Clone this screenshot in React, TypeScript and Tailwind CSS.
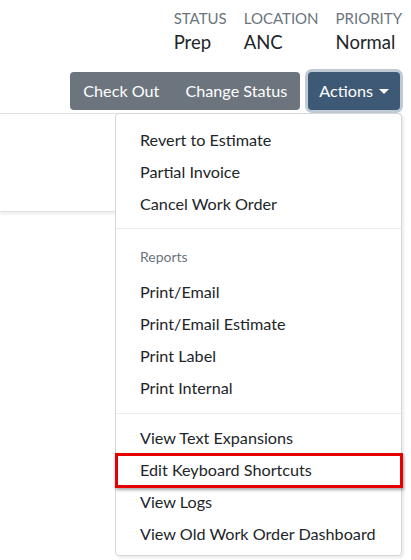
import React from "react";

const items1 = ["Revert to Estimate", "Partial Invoice", "Cancel Work Order"];
const items2 = ["Print/Email", "Print/Email Estimate", "Print Label", "Print Internal"];
const items3 = ["View Text Expansions", "Edit Keyboard Shortcuts", "View Logs", "View Old Work Order Dashboard"];

function Item({ label, boxed }: { label: string; boxed?: boolean }) {
  return (
    <div className="relative h-[32px] flex items-center pl-[24px] text-[16.2px] text-[#212529] whitespace-nowrap">
      {label}
      {boxed && (
        <div className="absolute left-[-1px] right-[-2px] top-[-1px] bottom-[-2px] border-[3px] border-[#e60000] shadow-[1px_2px_3px_rgba(0,0,0,0.35)]" />
      )}
    </div>
  );
}

export default function App() {
  return (
    <div className="w-[411px] h-[560px] bg-white overflow-hidden" style={{ fontFamily: "Lato, 'Noto Sans', Arial, sans-serif" }}>
      <div className="flex justify-end gap-[17px] pt-[8px] pr-[9px]">
        {[
          ["STATUS", "Prep"],
          ["LOCATION", "ANC"],
          ["PRIORITY", "Normal"],
        ].map(([k, v]) => (
          <div key={k} className="flex flex-col">
            <div className="text-[15px] leading-[21px] text-[#6c757d]">{k}</div>
            <div className="text-[18.5px] leading-[27px] text-[#212529]">{v}</div>
          </div>
        ))}
      </div>
      <div className="flex justify-end items-center gap-[8px] mt-[16px] pr-[11px]">
        <div className="flex h-[38px] rounded-[4px] bg-[#6c757d] text-white text-[16.2px]">
          <div className="flex items-center px-[13px]">Check Out</div>
          <div className="flex items-center px-[13px]">Change Status</div>
        </div>
        <div className="flex items-center h-[38px] px-[11px] rounded-[4px] bg-[#3e5975] text-white text-[16.2px] ring-[3px] ring-[#c0cad5]">
          Actions
          <span className="ml-[6px] w-0 h-0 border-t-[5px] border-t-white border-x-[5px] border-x-transparent" />
        </div>
      </div>
      <div className="relative mt-[3px]">
        <div className="mt-px h-[99px] mr-[10px] border-y border-[#dee2e6] bg-white shadow-[0_2px_3px_rgba(0,0,0,0.08)]" />
        <div className="absolute left-[115px] top-0 w-[287px] rounded-[4px] border border-[#d6d6d6] bg-white pt-[10px] pb-[5px] shadow-[2px_2px_3px_rgba(0,0,0,0.08)]">
          {items1.map((l) => (
            <Item key={l} label={l} />
          ))}
          <div className="my-[8px] h-px bg-[#e9ecef]" />
          <div className="h-[39px] flex items-center pl-[24px] text-[14px] text-[#6c757d]">Reports</div>
          {items2.map((l) => (
            <Item key={l} label={l} />
          ))}
          <div className="mt-[9px] mb-[8px] h-px bg-[#e9ecef]" />
          {items3.map((l) => (
            <Item key={l} label={l} boxed={l === "Edit Keyboard Shortcuts"} />
          ))}
        </div>
      </div>
    </div>
  );
}
